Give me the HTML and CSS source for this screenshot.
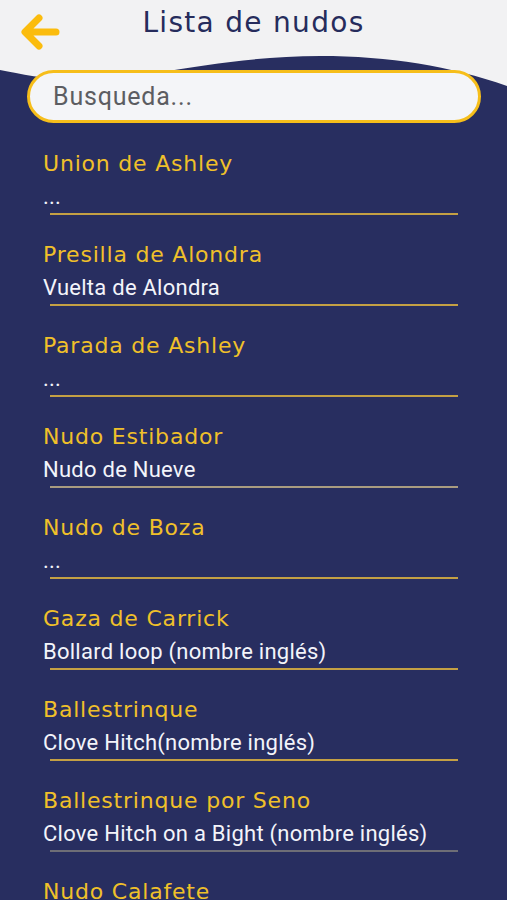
FILE: index.html
```html
<!DOCTYPE html>
<html lang="es">
<head>
	<meta charset="utf-8">
	<title>Lista de nudos</title>
	<link rel="stylesheet" href="styles.css">
</head>
<body>

	<div class="header">
		<svg class="back" width="44" height="44" viewBox="0 0 44 44">
			<path d="M38 22 H8 M21 8 L7 22 L21 36" fill="none" stroke="#fbbc0d" stroke-width="7" stroke-linecap="round" stroke-linejoin="round"/>
		</svg>
		<h1>Lista de nudos</h1>
	</div>

	<div class="search-area">
		<svg class="wave" width="507" height="50" viewBox="0 0 507 50">
			<path d="M0 0 H507 V36 C450 16 390 6 320 6 C220 6 140 31 75 30 C45 29 20 24 0 20 Z" fill="#f2f2f3"/>
		</svg>
		<input class="search" type="text" placeholder="Busqueda...">
	</div>

	<ul class="knots">
		<li>
			<div class="name">Union de Ashley</div>
			<div class="alt">...</div>
		</li>
		<li>
			<div class="name">Presilla de Alondra</div>
			<div class="alt">Vuelta de Alondra</div>
		</li>
		<li>
			<div class="name">Parada de Ashley</div>
			<div class="alt">...</div>
		</li>
		<li class="pale">
			<div class="name">Nudo Estibador</div>
			<div class="alt">Nudo de Nueve</div>
		</li>
		<li>
			<div class="name">Nudo de Boza</div>
			<div class="alt">...</div>
		</li>
		<li>
			<div class="name">Gaza de Carrick</div>
			<div class="alt">Bollard loop (nombre inglés)</div>
		</li>
		<li>
			<div class="name">Ballestrinque</div>
			<div class="alt">Clove Hitch(nombre inglés)</div>
		</li>
		<li class="grey">
			<div class="name">Ballestrinque por Seno</div>
			<div class="alt">Clove Hitch on a Bight (nombre inglés)</div>
		</li>
		<li>
			<div class="name">Nudo Calafete</div>
			<div class="alt">...</div>
		</li>
	</ul>

</body>
</html>
```

FILE: styles.css
```css
body {
	margin: 0;
	background-color: #282e60;
	font-family: Roboto, "Liberation Sans", sans-serif;
	overflow: hidden;
	height: 900px;
}

.header {
	background-color: #f2f2f3;
	height: 50px;
	position: relative;
	display: flex;
	justify-content: center;
}

.back {
	position: absolute;
	left: 18px;
	top: 10px;
}

h1 {
	margin: 0;
	padding-top: 3px;
	font-family: "DejaVu Sans", sans-serif;
	font-weight: 400;
	font-size: 28px;
	line-height: 40px;
	letter-spacing: 1.3px;
	color: #262c5c;
}

.search-area {
	position: relative;
	padding: 20px 26px 0 27px;
}

.wave {
	position: absolute;
	top: 0;
	left: 0;
}

.search {
	position: relative;
	display: block;
	box-sizing: border-box;
	width: 454px;
	height: 53px;
	border: 3px solid #f6be1b;
	border-radius: 27px;
	background-color: #f4f5f8;
	padding: 0 0 0 23px;
	font-family: Roboto, sans-serif;
	font-size: 25px;
	letter-spacing: 0.8px;
	color: #333;
	outline: none;
}

.search::placeholder {
	color: #5c5d62;
}

.knots {
	list-style: none;
	margin: 0;
	padding: 1px 0 0 0;
}

.knots li {
	padding-top: 24px;
}

.knots li::after {
	content: "";
	display: block;
	height: 2px;
	margin: 3px 49px 0 50px;
	background-color: #c4a044;
}

.knots li.pale::after {
	background-color: #a99c80;
}

.knots li.grey::after {
	background-color: #6e6e76;
}

.name {
	margin-left: 43px;
	font-family: "DejaVu Sans", sans-serif;
	font-size: 22px;
	line-height: 32px;
	letter-spacing: 0.8px;
	color: #f0c02a;
}

.alt {
	margin: 4px 0 0 43px;
	font-size: 22px;
	line-height: 26px;
	letter-spacing: 0.25px;
	color: #f3f4fa;
}
```
